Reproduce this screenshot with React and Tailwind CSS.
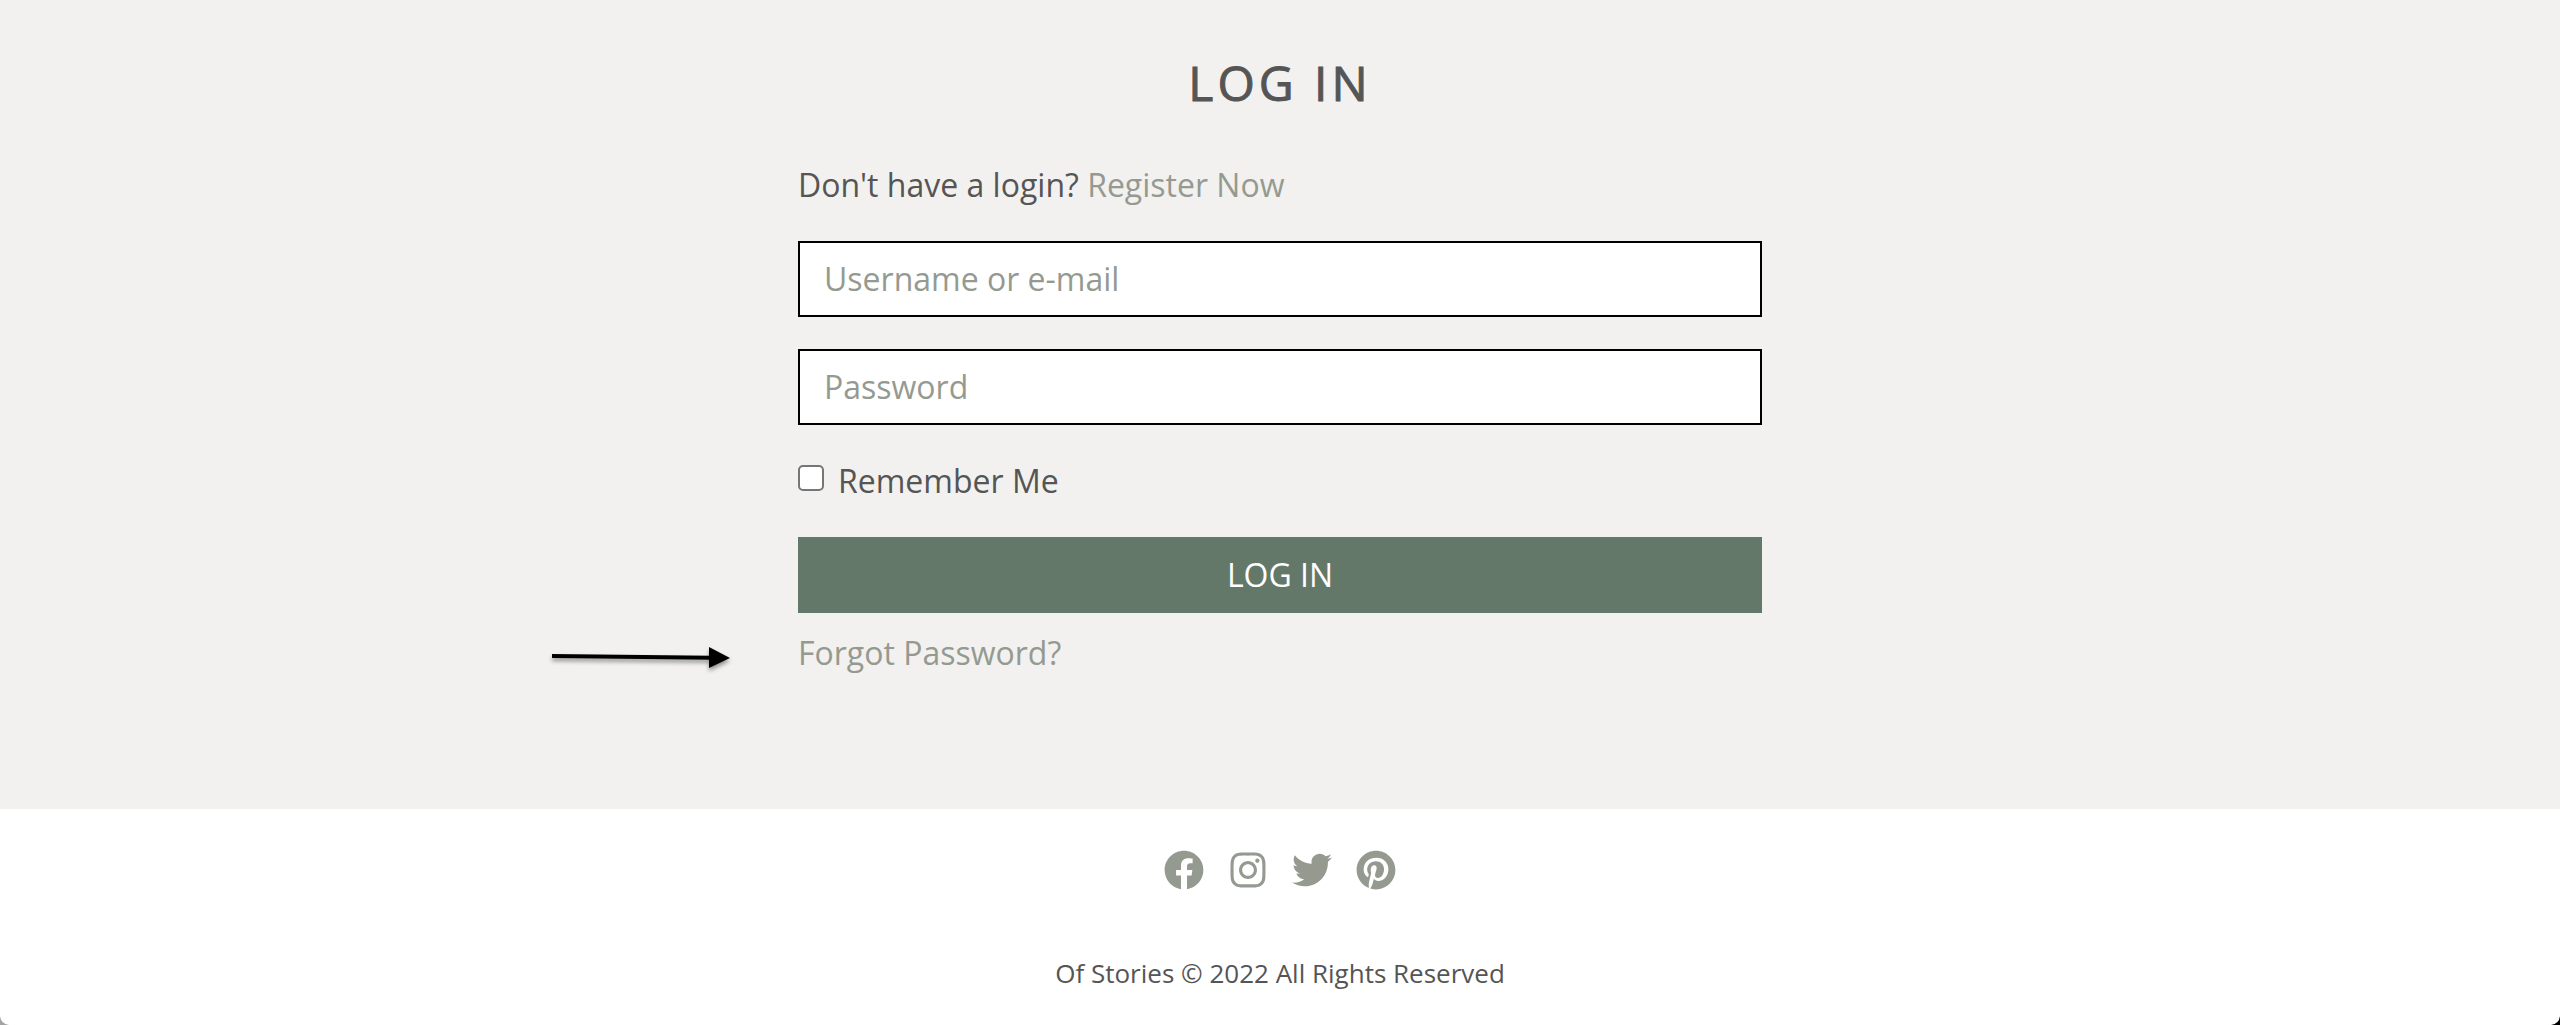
import { FaFacebook, FaInstagram, FaTwitter, FaPinterest } from "react-icons/fa";

const socials = [
  { name: "Facebook", Icon: FaFacebook },
  { name: "Instagram", Icon: FaInstagram },
  { name: "Twitter", Icon: FaTwitter },
  { name: "Pinterest", Icon: FaPinterest },
];

const fieldClass =
  "block h-[76px] w-full border-2 border-black bg-white px-6 pb-0.5 text-[32px] leading-[48px] text-[#555555] outline-none placeholder:text-[#959a91] placeholder:opacity-100";

function Arrow() {
  return (
    <svg
      className="absolute top-3 right-full mr-16 h-[32px] w-[184px] overflow-visible"
      viewBox="0 0 184 32"
      aria-hidden="true"
    >
      <defs>
        <filter id="arrow-shadow" x="-10%" y="-50%" width="120%" height="220%">
          <feDropShadow dx="0" dy="3" stdDeviation="2" floodColor="#000" floodOpacity="0.4" />
        </filter>
      </defs>
      <g filter="url(#arrow-shadow)">
        <path d="M2 13 L162 14.8 L162 18.8 L2 17 Z" />
        <path d="M159 6 L180 17 L159 27 Z" />
      </g>
    </svg>
  );
}

function LoginForm() {
  return (
    <form className="flex w-full max-w-[964px] flex-col" onSubmit={(e) => e.preventDefault()}>
      <p className="mb-8">
        Don't have a login?{" "}
        <a href="#register" className="text-[#959a91]">
          Register Now
        </a>
      </p>
      <input type="text" aria-label="Username or e-mail" placeholder="Username or e-mail" className={`${fieldClass} mb-8`} />
      <input type="password" aria-label="Password" placeholder="Password" className={`${fieldClass} mb-8`} />
      <div className="mb-8 flex items-start gap-3.5">
        <input
          id="remember"
          type="checkbox"
          className="mt-2 size-[26px] shrink-0 appearance-none rounded-[5px] border-2 border-[#767676] bg-white checked:bg-[#637869]"
        />
        <label htmlFor="remember">Remember Me</label>
      </div>
      <button type="submit" className="mb-4 h-[76px] w-full bg-[#637869] text-white">
        LOG IN
      </button>
      <div className="relative">
        <a href="#forgot" className="text-[#959a91]">
          Forgot Password?
        </a>
        <Arrow />
      </div>
    </form>
  );
}

function Footer() {
  return (
    <footer className="relative flex flex-1 flex-col items-center bg-white pt-[41px] pb-8">
      <nav aria-label="Social media" className="mb-[63px] flex gap-6">
        {socials.map(({ name, Icon }) => (
          <a key={name} href={`#${name.toLowerCase()}`} aria-label={name} className="text-[#959a91]">
            <Icon className="size-10" />
          </a>
        ))}
      </nav>
      <p className="text-[26px] leading-[40px]">Of Stories © 2022 All Rights Reserved</p>
      <svg className="absolute bottom-0 left-0 size-[9px]" viewBox="0 0 9 9" aria-hidden="true">
        <path d="M0 0 Q1 8 9 9 L0 9 Z" fill="#a3a3a3" />
      </svg>
      <svg className="absolute right-0 bottom-0 size-[9px]" viewBox="0 0 9 9" aria-hidden="true">
        <path d="M9 0 Q8 8 0 9 L9 9 Z" fill="#000" />
      </svg>
    </footer>
  );
}

export default function App() {
  return (
    <div className="flex min-h-screen flex-col bg-[#f2f1ef] font-['Open_Sans',sans-serif] text-[32px] leading-[48px] text-[#555555]">
      <main className="flex flex-col items-center px-8 pt-12 pb-[132px]">
        <h1 className="mb-[43px] text-[48px] leading-[70px] font-medium tracking-[4px] [-webkit-text-stroke:1px_#555555]">
          LOG IN
        </h1>
        <LoginForm />
      </main>
      <Footer />
    </div>
  );
}
